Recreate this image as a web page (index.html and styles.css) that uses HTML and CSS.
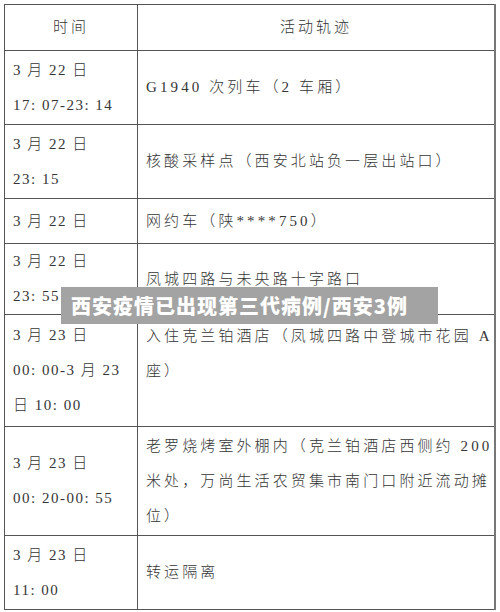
FILE: index.html
```html
<!DOCTYPE html>
<html lang="zh">
<head>
<meta charset="utf-8">
<link rel="stylesheet" href="styles.css">
</head>
<body>
<div class="page">
  <table class="trace">
    <tr class="r-head">
      <th class="c-time">时间</th>
      <th class="c-act">活动轨迹</th>
    </tr>
    <tr class="r1">
      <td class="c-time">3 月 22 日<br>17: 07-23: 14</td>
      <td class="c-act">G1940 次列车（2 车厢）</td>
    </tr>
    <tr class="r2">
      <td class="c-time">3 月 22 日<br>23: 15</td>
      <td class="c-act">核酸采样点（西安北站负一层出站口）</td>
    </tr>
    <tr class="r3">
      <td class="c-time">3 月 22 日</td>
      <td class="c-act">网约车（陕****750）</td>
    </tr>
    <tr class="r4">
      <td class="c-time">3 月 22 日<br>23: 55</td>
      <td class="c-act">凤城四路与未央路十字路口</td>
    </tr>
    <tr class="r5">
      <td class="c-time">3 月 23 日<br>00: 00-3 月 23<br>日 10: 00</td>
      <td class="c-act top">入住克兰铂酒店（凤城四路中登城市花园 A<br>座）</td>
    </tr>
    <tr class="r6">
      <td class="c-time">3 月 23 日<br>00: 20-00: 55</td>
      <td class="c-act">老罗烧烤室外棚内（克兰铂酒店西侧约 200<br>米处，万尚生活农贸集市南门口附近流动摊<br>位）</td>
    </tr>
    <tr class="r7">
      <td class="c-time">3 月 23 日<br>11: 00</td>
      <td class="c-act">转运隔离</td>
    </tr>
  </table>
  <div class="banner">西安疫情已出现第三代病例/西安3例</div>
</div>
</body>
</html>
```

FILE: styles.css
```css
html, body {
  margin: 0;
  padding: 0;
  background: #fff;
}
.page {
  position: relative;
  width: 500px;
  height: 612px;
  padding: 4px 0 0 4px;
  box-sizing: border-box;
}
.trace {
  border-collapse: collapse;
  width: 492px;
  table-layout: fixed;
  font-family: "Liberation Serif", "Noto Sans CJK SC", serif;
  font-weight: 300;
  font-size: 15px;
  color: #353535;
  line-height: 35px;
}
.trace th, .trace td {
  border: 1px solid #555;
  padding: 0;
  vertical-align: middle;
  white-space: nowrap;
}
.trace th {
  font-weight: 300;
  text-align: center;
  letter-spacing: 3px;
}
.trace td.c-time {
  padding-left: 8px;
  letter-spacing: 1.5px;
}
.trace td.c-act {
  padding-left: 8px;
  letter-spacing: 3.1px;
}
.trace .c-time { width: 132px; }
.trace th.c-act, .trace td.c-act { border-right: 2px solid #777; }
.trace td.top { vertical-align: top; padding-top: 4px; }
.r-head { height: 46px; }
.r1 { height: 74px; }
.r2 { height: 74px; }
.r3 { height: 45px; }
.r4 { height: 70px; }
.r5 { height: 112px; }
.r6 { height: 109px; }
.r7 { height: 74px; }
.banner {
  position: absolute;
  left: 61px;
  top: 287px;
  width: 377px;
  height: 37px;
  box-sizing: border-box;
  padding-left: 10px;
  background: #a3a3a3;
  color: #fff;
  font-family: "Noto Sans CJK SC", sans-serif;
  font-weight: 900;
  font-size: 20px;
  line-height: 37px;
  letter-spacing: 1px;
  white-space: nowrap;
}
```
